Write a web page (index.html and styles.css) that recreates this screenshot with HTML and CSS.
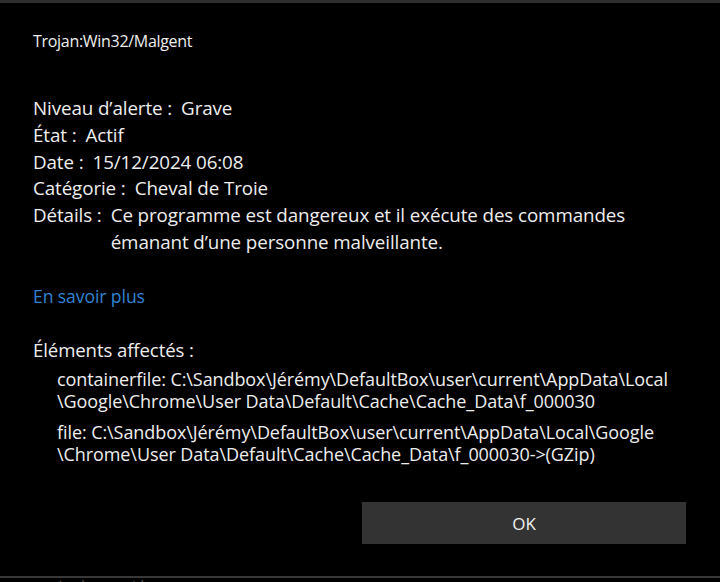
FILE: index.html
```html
<!DOCTYPE html>
<html lang="fr">
<head>
<meta charset="utf-8">
<title>Trojan:Win32/Malgent</title>
<link rel="stylesheet" href="styles.css">
</head>
<body>
<div class="screen">
  <div class="topbar"></div>
  <div class="dialog">
    <div class="title">Trojan:Win32/Malgent</div>
    <div class="info">
      <div class="row"><span class="label">Niveau d’alerte :</span><span class="value">Grave</span></div>
      <div class="row"><span class="label">État :</span><span class="value">Actif</span></div>
      <div class="row"><span class="label">Date :</span><span class="value">15/12/2024 06:08</span></div>
      <div class="row"><span class="label">Catégorie :</span><span class="value">Cheval de Troie</span></div>
      <div class="row"><span class="label">Détails :</span><span class="value wrap">Ce programme est dangereux et il exécute des commandes émanant d’une personne malveillante.</span></div>
    </div>
    <a class="more" href="#">En savoir plus</a>
    <div class="affected-title">Éléments affectés :</div>
    <div class="item">containerfile: C:\Sandbox\Jérémy\DefaultBox\user\current\AppData\Local<br>\Google\Chrome\User Data\Default\Cache\Cache_Data\f_000030</div>
    <div class="item item2">file: C:\Sandbox\Jérémy\DefaultBox\user\current\AppData\Local\Google<br>\Chrome\User Data\Default\Cache\Cache_Data\f_000030-&gt;(GZip)</div>
    <div class="actions">
      <button class="ok">OK</button>
    </div>
  </div>
  <div class="bottom">
    <div class="bottom-line"></div>
    <div class="bottom-text">Analyse rapide</div>
  </div>
</div>
</body>
</html>
```
FILE: styles.css
```css
html, body {
  margin: 0;
  padding: 0;
  background: #000;
}
.screen {
  width: 720px;
  height: 582px;
  overflow: hidden;
  background: #000;
  color: #eeeeee;
  font-family: "Open Sans", "Noto Sans", sans-serif;
  display: flex;
  flex-direction: column;
}
.topbar {
  height: 3px;
  background: #2e2e2e;
  flex: none;
}
.dialog {
  flex: none;
  height: 573px;
  padding: 0 34px 0 33px;
  box-sizing: border-box;
  display: flex;
  flex-direction: column;
}
.title {
  margin-top: 27px;
  font-size: 16px;
  line-height: 22px;
  letter-spacing: -0.3px;
}
.info {
  margin-top: 43px;
  font-size: 18.8px;
  line-height: 26.8px;
  letter-spacing: -0.1px;
}
.row {
  display: flex;
}
.label {
  flex: none;
  margin-right: 9px;
}
.value {
  flex: none;
}
.value.wrap {
  width: 545px;
}
.more {
  margin-top: 29px;
  color: #3283d2;
  text-decoration: none;
  font-size: 17.6px;
  line-height: 22px;
  letter-spacing: -0.1px;
  align-self: flex-start;
}
.affected-title {
  margin-top: 29px;
  font-size: 18.6px;
  line-height: 27px;
  letter-spacing: -0.1px;
}
.item {
  margin-top: 5px;
  padding-left: 24px;
  font-size: 18px;
  line-height: 22.5px;
  letter-spacing: -0.08px;
}
.item2 {
  margin-top: 8px;
}
.actions {
  margin-top: auto;
  margin-bottom: 32px;
  display: flex;
  justify-content: flex-end;
}
.ok {
  width: 324px;
  height: 42px;
  border: none;
  background: #333333;
  color: #f0f0f0;
  font-family: "Open Sans", "Noto Sans", sans-serif;
  font-size: 17px;
  padding: 0;
}
.bottom {
  flex: none;
  height: 6px;
  overflow: hidden;
}
.bottom-line {
  height: 2px;
  background: #383838;
}
.bottom-text {
  padding-left: 56px;
  font-size: 14px;
  line-height: 4px;
  color: #555;
  padding-top: 6px;
}
```
